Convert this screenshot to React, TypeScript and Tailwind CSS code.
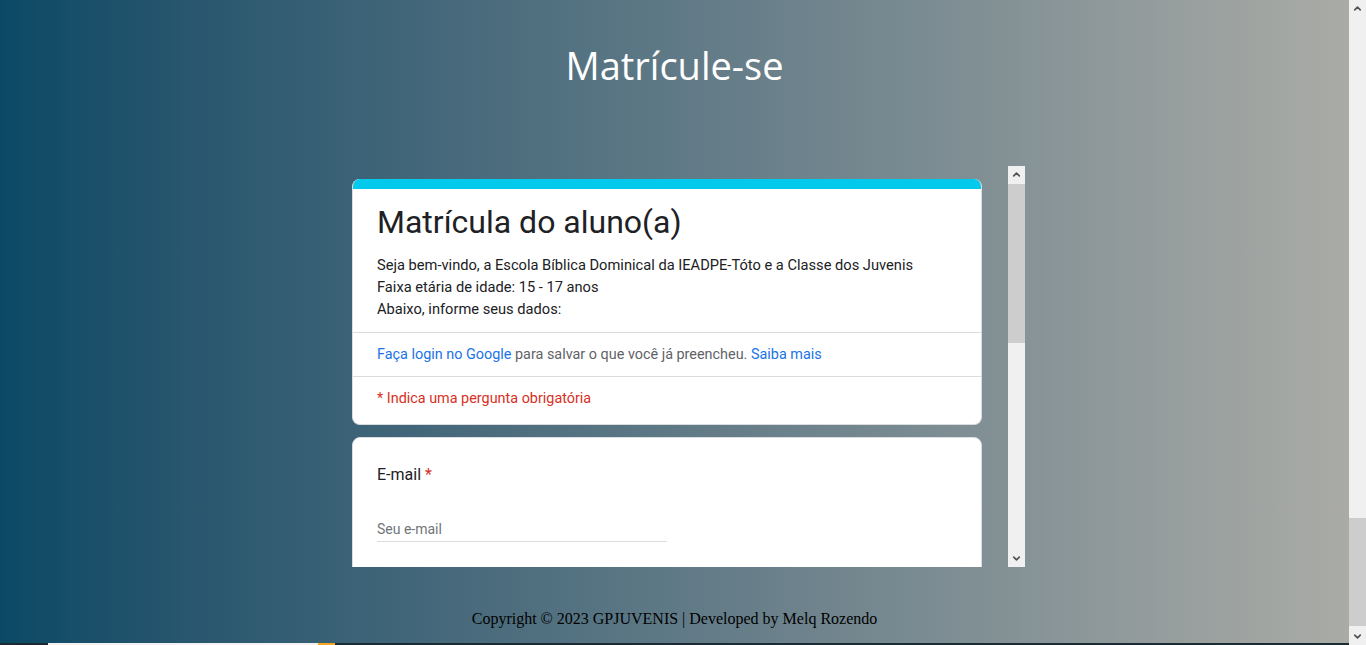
import { ChevronUp, ChevronDown } from "lucide-react";

const roboto = { fontFamily: "Roboto, 'Liberation Sans', sans-serif" };

const FormHeader = () => {
  return (
    <div className="w-[630px] rounded-lg bg-white border border-[#dadce0] border-t-0 overflow-hidden">
      <div className="h-[10px] bg-[#03c9ec]" />
      <div className="px-6 pt-[13px] pb-3">
        <h2 className="text-[32px] leading-[40px] text-[#202124]">Matrícula do aluno(a)</h2>
        <div className="mt-3 text-[14.67px] leading-[22px] text-[#202124]">
          <p>Seja bem-vindo, a Escola Bíblica Dominical da IEADPE-Tóto e a Classe dos Juvenis</p>
          <p>Faixa etária de idade: 15 - 17 anos</p>
          <p>Abaixo, informe seus dados:</p>
        </div>
      </div>
      <div className="border-t border-[#dadce0] h-[44px] px-6 flex items-center text-[14.4px] text-[#5f6368]">
        <p>
          <span className="text-[#1a73e8]">Faça login no Google</span> para salvar o que você já
          preencheu. <span className="text-[#1a73e8]">Saiba mais</span>
        </p>
      </div>
      <div className="border-t border-[#dadce0] px-6 pt-[12px] pb-[15px] text-[14.4px] leading-[20px] text-[#d93025]">
        * Indica uma pergunta obrigatória
      </div>
    </div>
  );
};

const EmailCard = () => {
  return (
    <div className="mt-3 w-[630px] h-[160px] rounded-lg bg-white border border-[#dadce0] px-6 pt-[25px]">
      <p className="text-[16px] leading-[24px] text-[#202124]">
        E-mail <span className="text-[#d93025]">*</span>
      </p>
      <div className="mt-[32px] w-[290px] border-b border-[#dadce0] pb-[2px]">
        <input
          type="text"
          placeholder="Seu e-mail"
          className="block w-full h-[20px] text-[14px] leading-[20px] text-[#202124] placeholder:text-[#70757a] outline-none bg-transparent"
        />
      </div>
    </div>
  );
};

const ScrollTrack = ({ thumbTop, thumbHeight }: { thumbTop: string; thumbHeight: string }) => {
  return (
    <div className="w-[17px] h-full bg-[#f0f0f0] flex flex-col shrink-0">
      <div className="h-[17px] flex items-center justify-center">
        <ChevronUp className="w-[11px] h-[11px] text-[#505050]" strokeWidth={3.5} />
      </div>
      <div className={thumbTop} />
      <div className={thumbHeight + " bg-[#cdcdcd]"} />
      <div className="flex-1" />
      <div className="h-[17px] flex items-center justify-center">
        <ChevronDown className="w-[11px] h-[11px] text-[#505050]" strokeWidth={3.5} />
      </div>
    </div>
  );
};

const App = () => {
  return (
    <div className="h-[645px] flex overflow-hidden">
      <main className="flex-1 flex flex-col">
        <section className="h-[643px] shrink-0 bg-gradient-to-r from-[#0a4965] to-[#aaaba6] pt-[45px] pb-3">
          <h1
            className="text-center text-[38px] leading-[40px] text-white"
            style={{ fontFamily: "'Open Sans', 'Noto Sans', sans-serif" }}
          >
            Matrícule-se
          </h1>
          <div className="mx-auto mt-[81px] w-[701px] h-[401px] flex" style={roboto}>
            <div className="flex-1 overflow-hidden pl-[28px] pt-[13px]">
              <FormHeader />
              <EmailCard />
            </div>
            <ScrollTrack thumbTop="h-px" thumbHeight="h-[159px]" />
          </div>
          <footer
            className="mt-10 text-center text-[16px] leading-[24px] text-black"
            style={{ fontFamily: "'Liberation Serif', 'Times New Roman', serif" }}
          >
            Copyright © 2023 GPJUVENIS | Developed by Melq Rozendo
          </footer>
        </section>
        <section className="flex-1 bg-[#1b2b33] pl-[48px]">
          <div className="flex h-full">
            <div className="w-[270px] bg-[#f2f2f2]" />
            <div className="w-[17px] bg-[#f5a623]" />
          </div>
        </section>
      </main>
      <ScrollTrack thumbTop="h-[501px]" thumbHeight="h-[108px]" />
    </div>
  );
};

export default App;
